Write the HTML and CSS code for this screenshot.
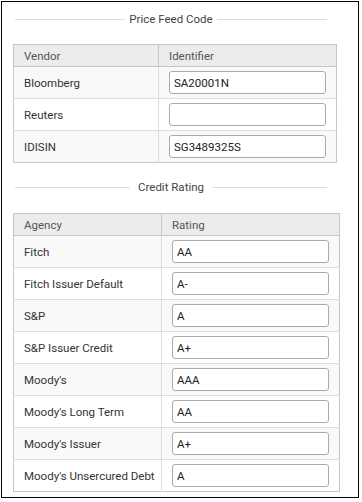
FILE: index.html
```html
<!DOCTYPE html>
<html lang="en">
<head>
    <meta charset="UTF-8">
    <meta name="viewport" content="width=device-width, initial-scale=1.0">
    <title>Security Codes</title>
    <link rel="stylesheet" href="styles.css">
</head>
<body>
    <div class="panel">

        <!-- Price Feed Code -->
        <div class="section-title">
            <span class="rule"></span>
            <span class="label">Price Feed Code</span>
            <span class="rule"></span>
        </div>
        <table class="grid grid-feed">
            <thead>
                <tr><th>Vendor</th><th>Identifier</th></tr>
            </thead>
            <tbody>
                <tr><td>Bloomberg</td><td><input type="text" value="SA20001N"></td></tr>
                <tr><td>Reuters</td><td><input type="text" value=""></td></tr>
                <tr><td>IDISIN</td><td><input type="text" value="SG3489325S"></td></tr>
            </tbody>
        </table>

        <!-- Credit Rating -->
        <div class="section-title second">
            <span class="rule"></span>
            <span class="label">Credit Rating</span>
            <span class="rule"></span>
        </div>
        <table class="grid grid-rating">
            <thead>
                <tr><th>Agency</th><th>Rating</th></tr>
            </thead>
            <tbody>
                <tr><td>Fitch</td><td><input type="text" value="AA"></td></tr>
                <tr><td>Fitch Issuer Default</td><td><input type="text" value="A-"></td></tr>
                <tr><td>S&amp;P</td><td><input type="text" value="A"></td></tr>
                <tr><td>S&amp;P Issuer Credit</td><td><input type="text" value="A+"></td></tr>
                <tr><td>Moody's</td><td><input type="text" value="AAA"></td></tr>
                <tr><td>Moody's Long Term</td><td><input type="text" value="AA"></td></tr>
                <tr><td>Moody's Issuer</td><td><input type="text" value="A+"></td></tr>
                <tr><td>Moody's Unsercured Debt</td><td><input type="text" value="A"></td></tr>
            </tbody>
        </table>
    </div>
</body>
</html>
```

FILE: styles.css
```css
body {
    margin: 0;
    padding: 1px;
    background: #fff;
    font-family: Roboto, "Liberation Sans", sans-serif;
    font-size: 11.5px;
    color: #333;
}
.panel {
    border: 1px solid #000;
    padding: 9px 0 0 11px;
    width: 345px;
    height: 486px;
}
.section-title {
    display: flex;
    align-items: center;
    width: 312px;
    margin: 0 0 17px 2px;
    line-height: 16px;
}
.section-title.second {
    margin-top: 16px;
    margin-bottom: 18px;
}
.section-title .rule {
    flex: 1;
    height: 1px;
    background: #ddd;
}
.section-title .label {
    padding: 0 4px;
    white-space: nowrap;
    color: #444;
}
.section-title.second .label {
    padding: 0 8px;
}
.grid {
    border-collapse: collapse;
    border: 1px solid #c6c6c6;
    table-layout: fixed;
}
.grid-feed {
    width: 324px;
}
.grid-feed th:first-child {
    width: 124px;
}
.grid-rating {
    width: 327px;
}
.grid-rating th:first-child {
    width: 127px;
}
.grid th {
    height: 21px;
    padding: 0 10px;
    background: #ececec;
    border: 1px solid #c6c6c6;
    text-align: left;
    font-weight: normal;
    color: #555;
}
.grid td {
    height: 31px;
    padding: 0 10px;
    border-top: 1px solid #ddd;
    border-left: 1px solid #ddd;
    white-space: nowrap;
    color: #333;
}
.grid td:first-child {
    border-left: none;
}
.grid tbody tr:nth-child(odd) {
    background: #f9f9f9;
}
.grid input {
    display: block;
    width: 100%;
    height: 23px;
    box-sizing: border-box;
    padding: 0 4px;
    border: 1px solid #aaa;
    border-radius: 3px;
    background: #fff;
    font-family: Roboto, "Liberation Sans", sans-serif;
    font-size: 11.5px;
    color: #222;
}
```
